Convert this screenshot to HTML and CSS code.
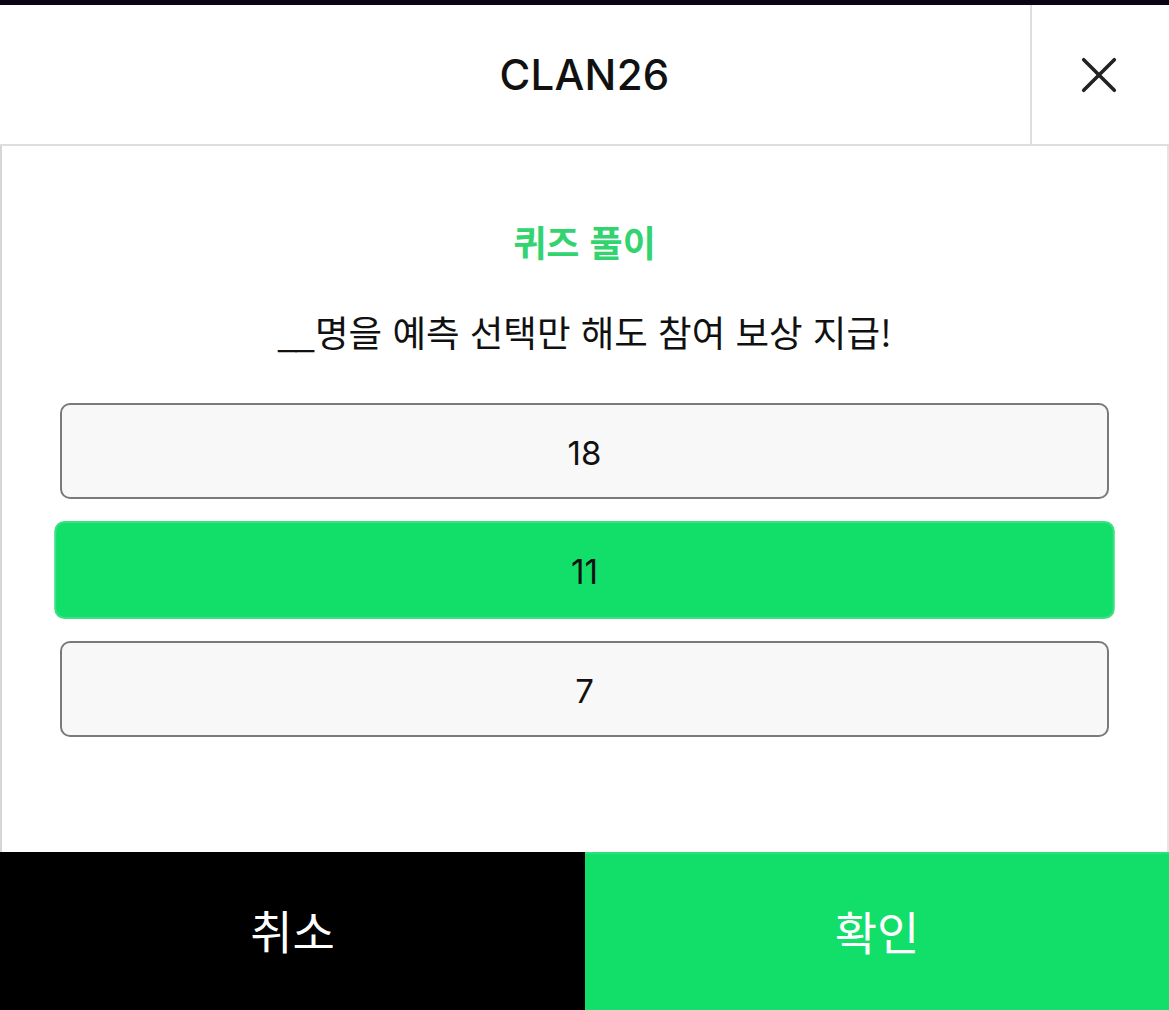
FILE: index.html
```html
<!DOCTYPE html>
<html lang="ko">
<head>
<meta charset="utf-8">
<title>CLAN26</title>
<link rel="stylesheet" href="styles.css">
</head>
<body>
<div class="app">
  <div class="topbar"></div>
  <header class="header">
    <div class="spacer"></div>
    <h1 class="brand">CLAN26</h1>
    <button class="close" aria-label="닫기">
      <svg width="40" height="40" viewBox="0 0 40 40"><path d="M3 3 L37 37 M37 3 L3 37" stroke="#222" stroke-width="4" stroke-linecap="round" fill="none"/></svg>
    </button>
  </header>
  <main class="content">
    <h2 class="quiz-title">퀴즈 풀이</h2>
    <p class="question"><span class="blank">__</span>명을 예측 선택만 해도 참여 보상 지급!</p>
    <div class="options">
      <button class="option">18</button>
      <button class="option selected">11</button>
      <button class="option">7</button>
    </div>
  </main>
  <footer class="actions">
    <button class="btn cancel">취소</button>
    <button class="btn confirm">확인</button>
  </footer>
</div>
</body>
</html>
```
FILE: styles.css
```css
* { box-sizing: border-box; }
html, body { margin: 0; padding: 0; background: #fff; }
body { font-family: "Inter", "Noto Sans CJK KR", sans-serif; color: #111; }
.app { display: flex; flex-direction: column; height: 1010px; }
.topbar { height: 5px; background: #0b0216; flex: none; }
.header {
  flex: none;
  height: 141px;
  display: grid;
  grid-template-columns: 139px 1fr 139px;
  border-bottom: 2px solid #dedede;
}
.brand {
  margin: 0;
  align-self: center;
  text-align: center;
  font-family: "Inter", sans-serif;
  font-weight: 500;
  font-size: 42px;
  letter-spacing: 0.3px;
  color: #111;
}
.close {
  border: none;
  border-left: 2px solid #dedede;
  background: #fff;
  display: flex;
  align-items: center;
  justify-content: center;
  padding: 0 4px 0 0;
  cursor: pointer;
}
.close svg { width: 36px; height: 36px; }
.content {
  flex: 1;
  border-left: 2px solid #d6d6d6;
  border-right: 2px solid #e4e4e4;
  padding: 70px 58px 0 58px;
  display: flex;
  flex-direction: column;
  align-items: stretch;
}
.quiz-title {
  margin: 0;
  text-align: center;
  font-family: "Noto Sans CJK KR", sans-serif;
  font-weight: 700;
  font-size: 36px;
  line-height: 50px;
  color: #33d36f;
}
.question {
  margin: 41px 0 0 0;
  text-align: center;
  font-family: "Noto Sans CJK KR", sans-serif;
  font-weight: 400;
  font-size: 36.5px;
  line-height: 50px;
  color: #111;
}
.blank { letter-spacing: -3px; margin-right: 3px; }
.options {
  margin-top: 46px;
  display: flex;
  flex-direction: column;
  gap: 23px;
}
.option {
  height: 96px;
  border: 2px solid #7a7a7a;
  border-radius: 10px;
  background: #f8f8f8;
  font-family: "Inter", sans-serif;
  font-size: 33px;
  color: #111;
  padding: 4px 0 0 0;
}
.option.selected {
  background: #12df69;
  border-color: #3fe083;
  transform: scale(1.011, 1.02);
}
.actions {
  flex: none;
  height: 158px;
  display: grid;
  grid-template-columns: 585px 1fr;
}
.btn {
  border: none;
  padding: 0 0 4px 0;
  font-family: "Noto Sans CJK KR", sans-serif;
  font-weight: 400;
  font-size: 46px;
  color: #fff;
  display: flex;
  align-items: center;
  justify-content: center;
}
.cancel { background: #000; }
.confirm { background: #12df69; border-top: 2px solid #2ee07d; }
```
